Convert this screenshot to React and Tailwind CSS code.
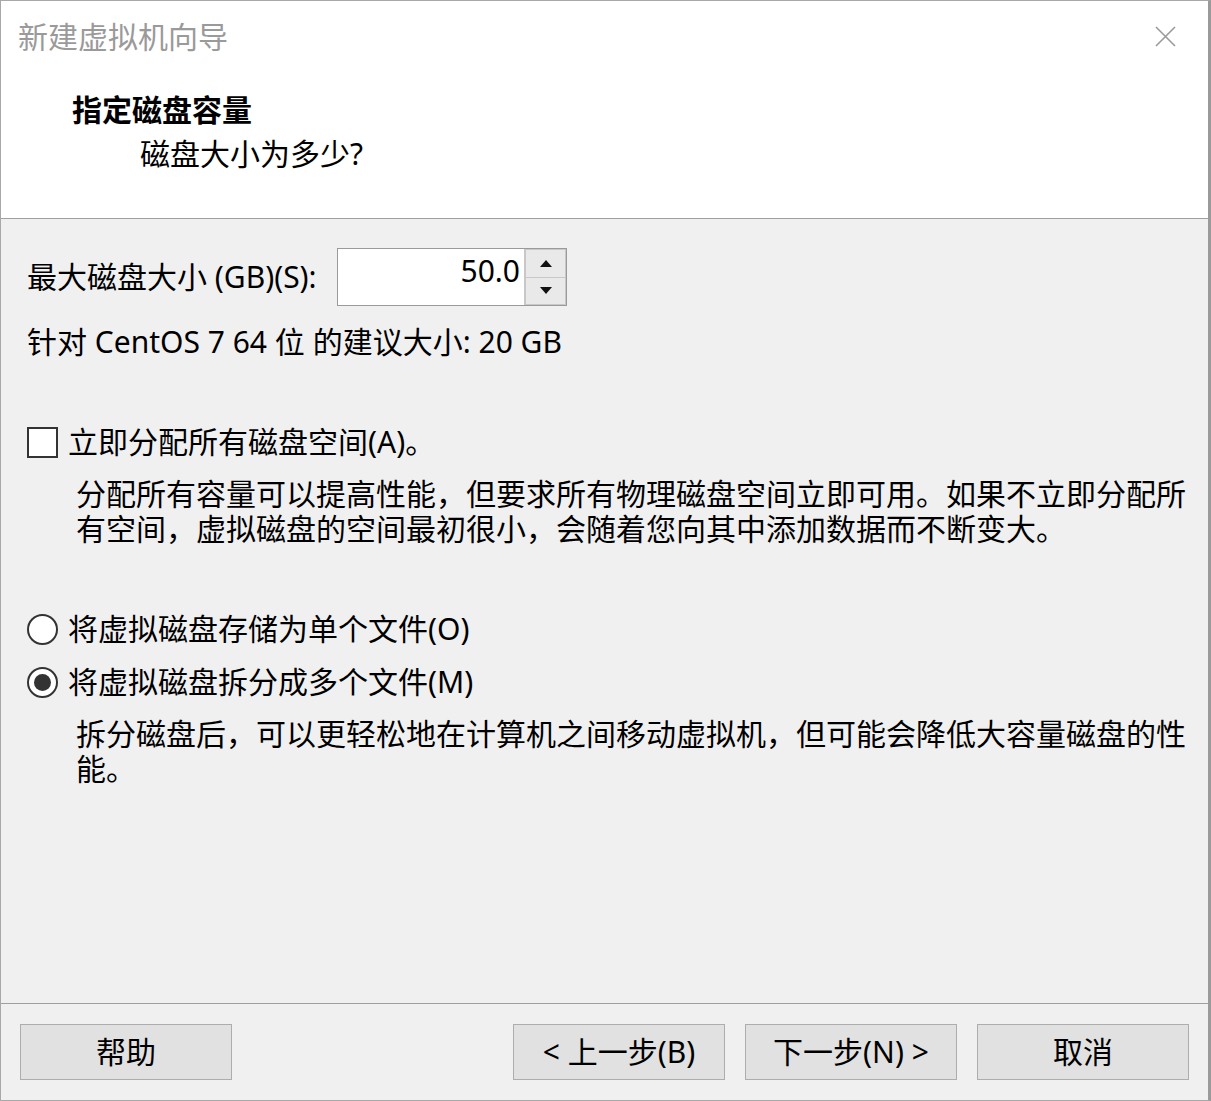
import React from 'react';

const font = { fontFamily: '"Noto Sans", "Noto Sans CJK SC", sans-serif' };

const Radio = ({ checked }) => (
  <span className="w-[31px] h-[31px] rounded-full border-2 border-[#333] bg-white flex items-center justify-center shrink-0">
    {checked && <span className="w-[17px] h-[17px] rounded-full bg-[#333]"></span>}
  </span>
);

const Button = ({ children }) => (
  <button className="w-[212px] h-[56px] bg-[#e1e1e1] border border-[#adadad] text-[30px] leading-[30px] text-black flex items-center justify-center">
    {children}
  </button>
);

const App = () => {
  return (
    <div
      className="w-[1211px] h-[1101px] flex flex-col bg-[#f0f0f0] border border-[#a8a8a8] border-r-[3px] border-r-[#9a9a9a] text-black overflow-hidden"
      style={font}
    >
      {/* TITLE + HEADER */}
      <div className="bg-white h-[218px] shrink-0 border-b border-[#a0a0a0] flex flex-col">
        <div className="flex items-center justify-between pl-[17px] pr-[32px] pt-[21px]">
          <p className="text-[30px] leading-[30px] text-[#9a9a9a]">新建虚拟机向导</p>
          <svg width="21" height="21" viewBox="0 0 21 21" className="mt-[-2px]">
            <path d="M1 1 L20 20 M20 1 L1 20" stroke="#9a9a9a" strokeWidth="1.6" fill="none" />
          </svg>
        </div>
        <p className="pl-[71px] mt-[43px] text-[30px] leading-[30px] font-bold">指定磁盘容量</p>
        <p className="pl-[139px] mt-[14px] text-[30px] leading-[30px]">磁盘大小为多少?</p>
      </div>

      {/* BODY */}
      <div className="flex-1 pl-[26px] flex flex-col">
        <div className="flex items-center mt-[29px] h-[58px]">
          <p className="text-[30px] leading-[30px] w-[310px]">最大磁盘大小 (GB)(S):</p>
          <div className="flex h-[58px] border border-[#9a9a9a] bg-white">
            <div className="w-[186px] flex items-center justify-end pr-[4px] pb-[12px] text-[30px] leading-[30px]">50.0</div>
            <div className="w-[42px] flex flex-col border-l border-[#c8c8c8] bg-[#e9e9e9]">
              <div className="flex-1 flex items-center justify-center border border-[#c8c8c8]">
                <svg width="12" height="7" viewBox="0 0 12 7"><path d="M6 0 L12 7 L0 7 Z" fill="#111" /></svg>
              </div>
              <div className="flex-1 flex items-center justify-center border border-t-0 border-[#c8c8c8]">
                <svg width="12" height="7" viewBox="0 0 12 7"><path d="M0 0 L12 0 L6 7 Z" fill="#111" /></svg>
              </div>
            </div>
          </div>
        </div>

        <p className="mt-[21px] text-[30px] leading-[30px]">针对 CentOS 7 64 位 的建议大小: 20 GB</p>

        <div className="flex items-center gap-[10px] mt-[70px] h-[30px]">
          <span className="w-[31px] h-[31px] border-2 border-[#333] bg-white shrink-0"></span>
          <p className="text-[30px] leading-[30px]">立即分配所有磁盘空间(A)。</p>
        </div>
        <p className="ml-[49px] mt-[19px] w-[1125px] text-[30px] leading-[35px]">
          分配所有容量可以提高性能，但要求所有物理磁盘空间立即可用。如果不立即分配所有空间，虚拟磁盘的空间最初很小，会随着您向其中添加数据而不断变大。
        </p>

        <div className="flex items-center gap-[10px] mt-[68px] h-[30px]">
          <Radio />
          <p className="text-[30px] leading-[30px]">将虚拟磁盘存储为单个文件(O)</p>
        </div>
        <div className="flex items-center gap-[10px] mt-[23px] h-[30px]">
          <Radio checked />
          <p className="text-[30px] leading-[30px]">将虚拟磁盘拆分成多个文件(M)</p>
        </div>
        <p className="ml-[49px] mt-[19px] w-[1125px] text-[30px] leading-[35px]">
          拆分磁盘后，可以更轻松地在计算机之间移动虚拟机，但可能会降低大容量磁盘的性能。
        </p>
      </div>

      {/* FOOTER */}
      <div className="h-[97px] shrink-0 border-t border-[#a0a0a0] flex items-center px-[19px] pb-[1px]">
        <Button>帮助</Button>
        <div className="flex-1"></div>
        <div className="flex gap-[20px]">
          <Button>&lt; 上一步(B)</Button>
          <Button>下一步(N) &gt;</Button>
          <Button>取消</Button>
        </div>
      </div>
    </div>
  );
};

export default App;
